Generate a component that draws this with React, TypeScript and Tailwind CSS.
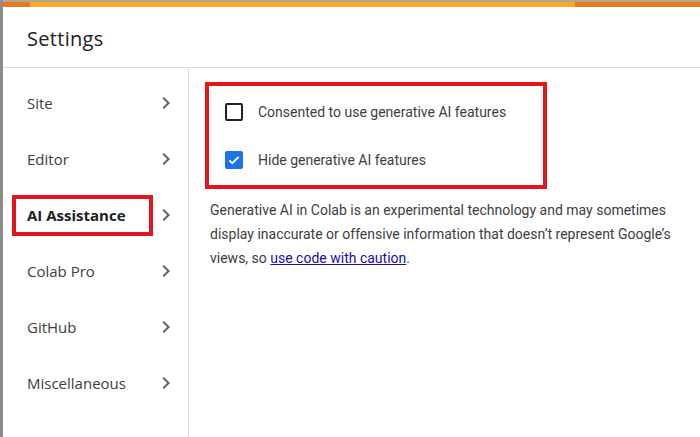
import React from "react";

const Chevron = () => (
  <svg width="24" height="24" viewBox="0 0 24 24" className="shrink-0">
    <path d="M8.59 16.59 13.17 12 8.59 7.41 10 6l6 6-6 6z" fill="#5f6368" />
  </svg>
);

const NavItem = ({ label, boxed }: { label: string; boxed?: boolean }) => (
  <div className="h-[56px] flex items-center justify-between pl-[24px] pr-[10px] relative">
    {boxed ? (
      <div className="-ml-[15px] border-[4px] border-[#e3161f] h-[41px] w-[141px] flex items-center pl-[11px]">
        <span className="text-[15px] font-bold text-[#202124]">{label}</span>
      </div>
    ) : (
      <span className="text-[15px] text-[#3c4043]">{label}</span>
    )}
    <Chevron />
  </div>
);

export default function App() {
  return (
    <div
      className="w-[700px] h-[437px] overflow-hidden flex bg-[#9e9e9e]"
      style={{ fontFamily: "Roboto, 'Open Sans', sans-serif" }}
    >
      <div className="w-[3px] shrink-0 bg-[#8c8c8c]" />
      <div className="flex-1 flex flex-col bg-white">
        <div className="h-[2px] bg-[#b7a68e]" />
        <div className="h-[5px] flex">
          <div className="w-[27px] bg-[#e07b22]" />
          <div className="flex-1 bg-[#f3ad2a]" />
          <div className="w-[125px] bg-[#e07b22]" />
        </div>
        <div className="h-[61px] flex items-center pl-[24px] pt-[4px] border-b border-[#dadce0]">
          <span className="text-[20px] text-[#202124] tracking-[0.3px]" style={{ fontFamily: "'Open Sans', Roboto, sans-serif" }}>
            Settings
          </span>
        </div>
        <div className="flex-1 flex">
          <div className="w-[186px] border-r border-[#dadce0] pt-[7px]" style={{ fontFamily: "'Open Sans', Roboto, sans-serif" }}>
            <NavItem label="Site" />
            <NavItem label="Editor" />
            <NavItem label="AI Assistance" boxed />
            <NavItem label="Colab Pro" />
            <NavItem label="GitHub" />
            <NavItem label="Miscellaneous" />
          </div>
          <div className="flex-1 pl-[16px] pt-[14px]">
            <div className="border-[4px] border-[#e3161f] w-[342px] h-[107px] flex flex-col justify-center gap-[30px] pl-[16px]">
              <div className="flex items-center gap-[15px]">
                <div className="w-[18px] h-[18px] border-2 border-[#202124] rounded-[2px]" />
                <span className="text-[14px] leading-[18px] text-[#3c4043]">Consented to use generative AI features</span>
              </div>
              <div className="flex items-center gap-[15px]">
                <div className="w-[18px] h-[18px] bg-[#1a73e8] rounded-[2px] flex items-center justify-center">
                  <svg width="14" height="14" viewBox="0 0 24 24">
                    <path d="M4 12.5l5 5L20 6.5" fill="none" stroke="white" strokeWidth="3" />
                  </svg>
                </div>
                <span className="text-[14px] leading-[18px] text-[#3c4043]">Hide generative AI features</span>
              </div>
            </div>
            <p className="mt-[9px] ml-[5px] w-[480px] text-[14px] leading-[24px] text-[#3c4043]">
              Generative AI in Colab is an experimental technology and may sometimes display inaccurate or offensive information that doesn’t represent Google’s views, so{" "}
              <a className="text-[#1a0dab] underline">use code with caution</a>.
            </p>
          </div>
        </div>
      </div>
    </div>
  );
}
